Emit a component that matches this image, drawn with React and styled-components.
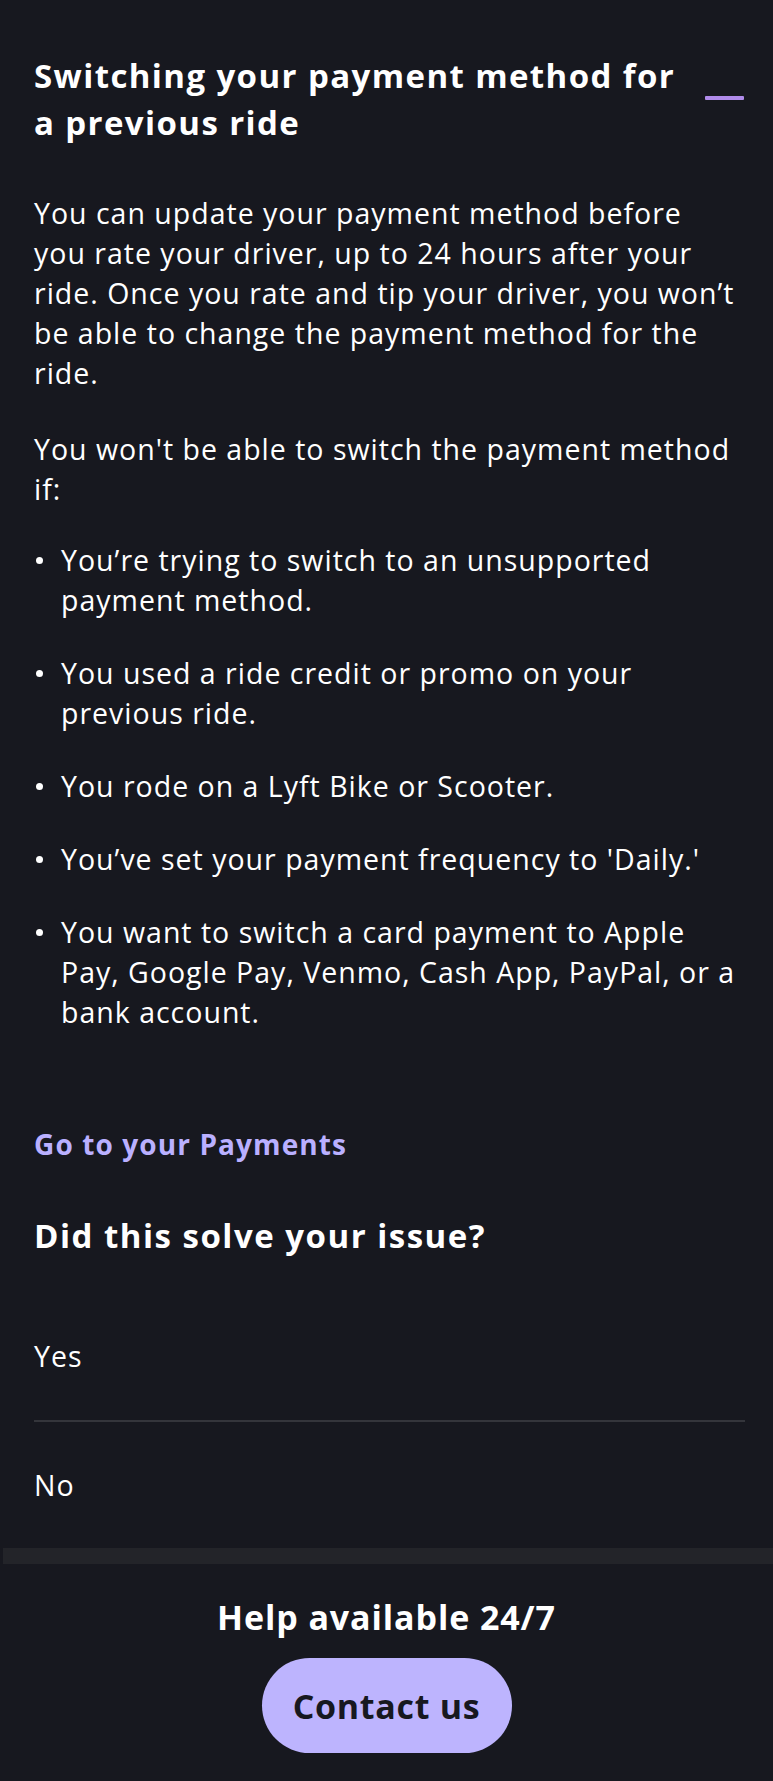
import React from "react";
import styled, { createGlobalStyle } from "styled-components";

const FONT = `"Open Sans", "Noto Sans", sans-serif`;

const Global = createGlobalStyle`
  html, body { margin: 0; padding: 0; background: #17181f; }
  body { font-family: ${FONT}; color: #ffffff; -webkit-font-smoothing: antialiased; }
  * { box-sizing: border-box; }
`;

const Page = styled.div`
  width: 773px;
  min-height: 1781px;
  background: #17181f;
  display: flex;
  flex-direction: column;
`;

const Article = styled.article`
  padding: 52px 29px 0 34px;
  display: flex;
  flex-direction: column;
`;

const HeaderRow = styled.div`
  display: flex;
  align-items: flex-start;
  justify-content: space-between;
  gap: 20px;
`;

const Title = styled.h1`
  margin: 0;
  font-size: 33px;
  line-height: 47px;
  font-weight: 700;
  letter-spacing: 1.4px;
  max-width: 650px;
`;

const Dash = styled.span`
  display: block;
  flex: none;
  width: 39px;
  height: 4px;
  margin-top: 44px;
  border-radius: 1px;
  background: #b08bea;
`;

const Para = styled.p`
  margin: ${(p) => p.$top}px 5px 0 0;
  font-size: 28.5px;
  line-height: 40px;
  letter-spacing: 1px;
  font-weight: 400;
`;

const List = styled.ul`
  margin: 31px 5px 0 0;
  padding: 0;
  list-style: none;
  display: flex;
  flex-direction: column;
  gap: 33px;
`;

const Item = styled.li`
  position: relative;
  padding-left: 27px;
  font-size: 28.5px;
  line-height: 40px;
  letter-spacing: 1px;
  &::before {
    content: "";
    position: absolute;
    left: 2px;
    top: 17px;
    width: 7px;
    height: 7px;
    border-radius: 50%;
    background: #ffffff;
  }
`;

const Link = styled.a`
  margin-top: 92px;
  font-size: 28px;
  line-height: 40px;
  font-weight: 700;
  letter-spacing: 1.1px;
  color: #bab0ff;
  text-decoration: none;
`;

const Question = styled.h2`
  margin: 48px 0 0;
  font-size: 33px;
  line-height: 47px;
  font-weight: 700;
  letter-spacing: 1.5px;
`;

const Options = styled.div`
  margin-top: 33px;
  display: flex;
  flex-direction: column;
`;

const Option = styled.button`
  all: unset;
  height: ${(p) => (p.$divider ? 128 : 126)}px;
  display: flex;
  align-items: center;
  font-family: ${FONT};
  font-size: 28.5px;
  letter-spacing: 1px;
  color: #ffffff;
  border-bottom: ${(p) => (p.$divider ? "2px solid #34353b" : "none")};
  margin-right: -1px;
`;

const Band = styled.div`
  height: 16px;
  margin-left: 3px;
  background: #232429;
`;

const Footer = styled.footer`
  padding-top: 33px;
  display: flex;
  flex-direction: column;
  align-items: center;
  gap: 21px;
`;

const HelpTitle = styled.h3`
  margin: 0;
  font-size: 34px;
  line-height: 40px;
  font-weight: 700;
  letter-spacing: 0.9px;
`;

const Contact = styled.button`
  all: unset;
  width: 250px;
  height: 95px;
  border-radius: 48px;
  background: #bdb4fe;
  color: #17181f;
  font-family: ${FONT};
  font-size: 34px;
  font-weight: 700;
  letter-spacing: 0.7px;
  display: flex;
  align-items: center;
  justify-content: center;
`;

export default function App() {
  return (
    <Page>
      <Global />
      <Article>
        <HeaderRow>
          <Title>Switching your payment method for a previous ride</Title>
          <Dash />
        </HeaderRow>
        <Para $top={47}>
          You can update your payment method before you rate your driver, up to 24 hours after your
          ride. Once you rate and tip your driver, you won’t be able to change the payment method for
          the ride.
        </Para>
        <Para $top={36}>You won't be able to switch the payment method if:</Para>
        <List>
          <Item>You’re trying to switch to an unsupported payment method.</Item>
          <Item>You used a ride credit or promo on your previous ride.</Item>
          <Item>You rode on a Lyft Bike or Scooter.</Item>
          <Item>You’ve set your payment frequency to 'Daily.'</Item>
          <Item>You want to switch a card payment to Apple Pay, Google Pay, Venmo, Cash App, PayPal, or a bank account.</Item>
        </List>
        <Link href="#">Go to your Payments</Link>
        <Question>Did this solve your issue?</Question>
        <Options>
          <Option $divider>Yes</Option>
          <Option>No</Option>
        </Options>
      </Article>
      <Band />
      <Footer>
        <HelpTitle>Help available 24/7</HelpTitle>
        <Contact>Contact us</Contact>
      </Footer>
    </Page>
  );
}
